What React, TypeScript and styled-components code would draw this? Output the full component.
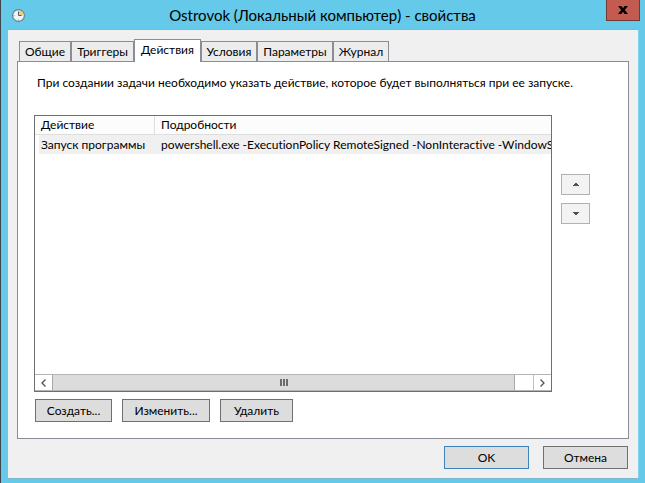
import React, { useState } from "react";
import styled, { createGlobalStyle } from "styled-components";

const GlobalStyle = createGlobalStyle`
  *, *::before, *::after { box-sizing: border-box; }
  body { margin: 0; font-variant-ligatures: none; }
  body, button, table { font-family: Lato, "Open Sans", sans-serif; font-size: 12px; color: #000; }
  button { margin: 0; padding: 0; line-height: 16px; }
`;

const Window = styled.div`
  display: flex;
  flex-direction: column;
  min-height: 100vh;
  padding: 0 6px 4px 7px;
  background: #65c9e9;
  border-left: 1px solid #3e464c;
`;

const TitleBar = styled.header`
  display: grid;
  grid-template-columns: 31px 1fr 33px;
  height: 29px;
`;

const AppIcon = styled.svg`
  margin: 8px 0 0 3px;
`;

const Title = styled.h1`
  margin: 0;
  text-align: center;
  font-size: 15px;
  font-weight: 400;
  line-height: 30px;
  white-space: nowrap;
`;

const CloseButton = styled.button`
  display: flex;
  align-items: center;
  justify-content: center;
  width: 34px;
  height: 21px;
  background: #c35b51;
  border: 1px solid #6f3a36;
  border-top: 0;
`;

const Body = styled.main`
  display: flex;
  flex-direction: column;
  flex: 1;
  padding: 9px;
  background: #f0f0f0;
  border: solid #7db9cf;
  border-width: 1px 0;
  border-right: 1px solid #7fd3ee;
`;

const TabList = styled.div`
  display: flex;
  align-items: flex-end;
  height: 22px;
  padding-left: 2px;
`;

const Tab = styled.button<{ $active: boolean; $width: number }>`
  position: relative;
  width: ${(p) => p.$width}px;
  height: ${(p) => (p.$active ? 23 : 20)}px;
  margin-bottom: ${(p) => (p.$active ? -1 : 0)}px;
  padding-bottom: ${(p) => (p.$active ? 2 : 0)}px;
  flex: none;
  background: ${(p) => (p.$active ? "#fff" : "#ececec")};
  border: 1px solid #8c8c96;
  border-bottom: 0;
  white-space: nowrap;
`;

const Panel = styled.section`
  display: flex;
  flex-direction: column;
  flex: 1;
  padding: 13px 38px 16px 16px;
  background: #fff;
  border: 1px solid #8c8c96;
`;

const Hint = styled.p`
  margin: 0 0 24px 3px;
  line-height: 16px;
  white-space: nowrap;
`;

const ListArea = styled.div`
  display: flex;
  flex: 1;
  gap: 9px;
`;

const List = styled.div`
  display: flex;
  flex-direction: column;
  flex: 1;
  min-width: 0;
  border: 1px solid #6e6e73;
`;

const ListView = styled.div`
  flex: 1;
  overflow: hidden;
`;

const Table = styled.table`
  width: 100%;
  table-layout: fixed;
  border-collapse: separate;
  border-spacing: 0;
`;

const HeadCell = styled.th<{ $width?: number }>`
  width: ${(p) => (p.$width ? `${p.$width}px` : "auto")};
  height: 19px;
  padding: 0 6px;
  text-align: left;
  font-weight: 400;
  line-height: 18px;
  background: #fcfcfc;
  border-bottom: 1px solid #dedede;
  & + & { border-left: 1px solid #dedede; }
`;

const Cell = styled.td`
  height: 19px;
  padding: 0 0 0 6px;
  line-height: 19px;
  white-space: nowrap;
  background: #f0f0f0;
  &:first-child { background: linear-gradient(to right, #fff 4px, #f0f0f0 4px); }
  & + & { padding-left: 7px; }
`;

const ScrollBar = styled.div`
  display: flex;
  height: 17px;
  background: #fff;
  border: 1px solid #b4b4b4;
  border-width: 1px 0;
`;

const ScrollButton = styled.button`
  display: flex;
  align-items: center;
  justify-content: center;
  width: 17px;
  background: #fff;
  border: 0;
`;

const ScrollTrack = styled.div`
  flex: 1;
  padding-right: 18px;
  border-right: 1px solid #c0c0c0;
`;

const ScrollThumb = styled.div`
  display: flex;
  align-items: center;
  justify-content: center;
  gap: 1px;
  height: 100%;
  background: #dcdcdc;
  border: solid #a8a8a8;
  border-width: 0 1px;
`;

const Grip = styled.span`
  width: 2px;
  height: 7px;
  background: #6c6c6c;
`;

const OrderButtons = styled.div`
  display: flex;
  flex-direction: column;
  gap: 8px;
  padding-top: 59px;
`;

const OrderButton = styled.button`
  display: flex;
  align-items: center;
  justify-content: center;
  width: 29px;
  height: 21px;
  background: #f3f3f3;
  border: 1px solid #adb2b2;
`;

const ButtonRow = styled.div<{ $end?: boolean }>`
  display: flex;
  justify-content: ${(p) => (p.$end ? "flex-end" : "flex-start")};
  gap: ${(p) => (p.$end ? 14 : 10)}px;
  margin-top: 7px;
  padding: 0 1px;
`;

const PushButton = styled.button<{ $width: number; $primary?: boolean }>`
  width: ${(p) => p.$width}px;
  height: 23px;
  background: #dddddd;
  border: 1px solid ${(p) => (p.$primary ? "#3c83bd" : "#707070")};
`;

const tabs = [
  { label: "Общие", width: 52 },
  { label: "Триггеры", width: 63 },
  { label: "Действия", width: 67 },
  { label: "Условия", width: 56 },
  { label: "Параметры", width: 76 },
  { label: "Журнал", width: 56 },
];

const actions = [
  {
    name: "Запуск программы",
    details: "powershell.exe -ExecutionPolicy RemoteSigned -NonInteractive -WindowS",
  },
];

export default function App() {
  const [active, setActive] = useState("Действия");
  return (
    <>
      <GlobalStyle />
      <Window>
        <TitleBar>
          <AppIcon width="15" height="15" viewBox="0 0 15 15" aria-hidden="true">
            <circle cx="7.5" cy="7.5" r="5.9" fill="#dfe9ee" stroke="#6f7f88" strokeWidth="1.2" />
            <circle cx="7.5" cy="7.5" r="4.8" fill="#eef4f7" />
            <path d="M7.5 7.5V2.2A5.3 5.3 0 0 1 12.8 7.5Z" fill="#f3cc7a" />
            <path d="M7.5 3.5V7.5H10.5" fill="none" stroke="#4d5f73" strokeWidth="1" />
            <path d="M2.5 7.5h1M7.5 11.5v1" stroke="#8b9aa5" />
          </AppIcon>
          <Title>Ostrovok (Локальный компьютер) - свойства</Title>
          <CloseButton aria-label="Закрыть">
            <svg width="10" height="8" viewBox="0 0 10 8">
              <path d="M0 0h3.4L5 2.3 6.6 0H10L6.8 4 10 8H6.6L5 5.7 3.4 8H0L3.2 4z" fill="#000" />
            </svg>
          </CloseButton>
        </TitleBar>
        <Body>
          <TabList role="tablist">
            {tabs.map((t) => (
              <Tab
                key={t.label}
                role="tab"
                aria-selected={t.label === active}
                $active={t.label === active}
                $width={t.width}
                onClick={() => setActive(t.label)}
              >
                {t.label}
              </Tab>
            ))}
          </TabList>
          <Panel role="tabpanel" aria-label={active}>
            <Hint>При создании задачи необходимо указать действие, которое будет выполняться при ее запуске.</Hint>
            <ListArea>
              <List>
                <ListView>
                  <Table>
                    <thead>
                      <tr>
                        <HeadCell $width={119}>Действие</HeadCell>
                        <HeadCell>Подробности</HeadCell>
                      </tr>
                    </thead>
                    <tbody>
                      {actions.map((a) => (
                        <tr key={a.name}>
                          <Cell>{a.name}</Cell>
                          <Cell>{a.details}</Cell>
                        </tr>
                      ))}
                    </tbody>
                  </Table>
                </ListView>
                <ScrollBar>
                  <ScrollButton aria-label="Прокрутить влево">
                    <svg width="5" height="8" viewBox="0 0 5 8">
                      <path d="M4.5 0.5L1 4l3.5 3.5" fill="none" stroke="#505050" strokeWidth="1.3" />
                    </svg>
                  </ScrollButton>
                  <ScrollTrack>
                    <ScrollThumb>
                      <Grip />
                      <Grip />
                      <Grip />
                    </ScrollThumb>
                  </ScrollTrack>
                  <ScrollButton aria-label="Прокрутить вправо">
                    <svg width="5" height="8" viewBox="0 0 5 8">
                      <path d="M0.5 0.5L4 4 0.5 7.5" fill="none" stroke="#505050" strokeWidth="1.3" />
                    </svg>
                  </ScrollButton>
                </ScrollBar>
              </List>
              <OrderButtons>
                <OrderButton aria-label="Вверх">
                  <svg width="6" height="3" viewBox="0 0 6 3">
                    <path d="M2 0h2v1h1v1h1v1H0V2h1V1h1z" fill="#505050" />
                  </svg>
                </OrderButton>
                <OrderButton aria-label="Вниз">
                  <svg width="6" height="3" viewBox="0 0 6 3">
                    <path d="M0 0h6v1H5v1H4v1H2V2H1V1H0z" fill="#505050" />
                  </svg>
                </OrderButton>
              </OrderButtons>
            </ListArea>
            <ButtonRow>
              <PushButton $width={77}>Создать...</PushButton>
              <PushButton $width={88}>Изменить...</PushButton>
              <PushButton $width={73}>Удалить</PushButton>
            </ButtonRow>
          </Panel>
          <ButtonRow $end>
            <PushButton $width={85} $primary>OK</PushButton>
            <PushButton $width={85}>Отмена</PushButton>
          </ButtonRow>
        </Body>
      </Window>
    </>
  );
}
